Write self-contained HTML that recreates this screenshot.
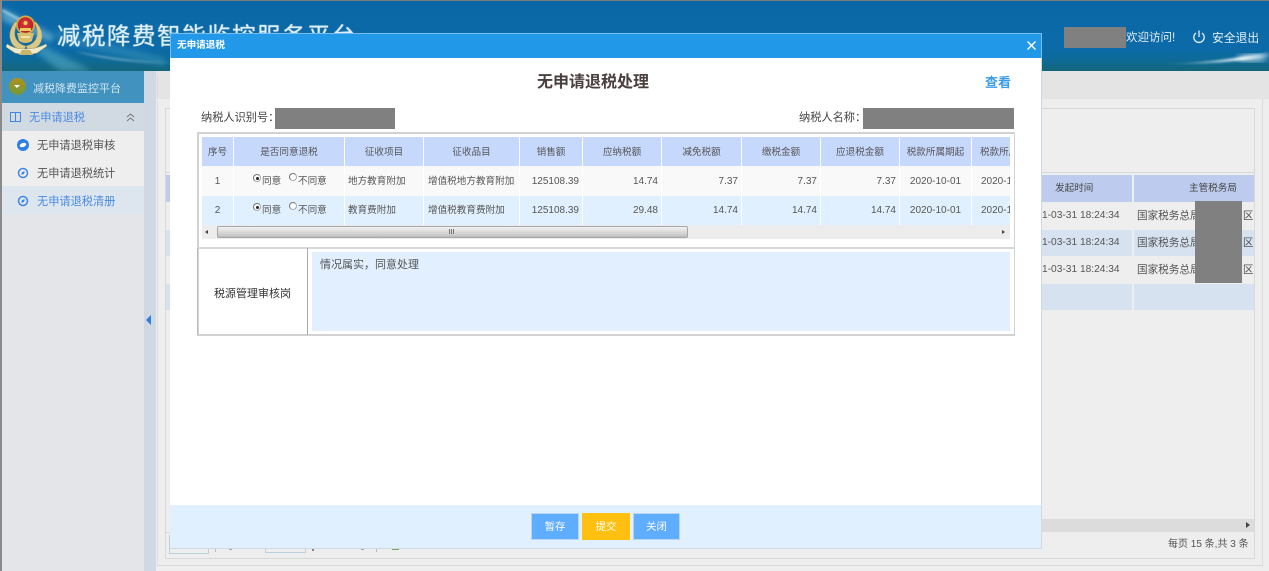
<!DOCTYPE html>
<html lang="zh"><head><meta charset="utf-8"><title>无申请退税</title>
<style>
html,body{margin:0;padding:0;width:1269px;height:571px;overflow:hidden;background:#eee}
body{position:relative;font-family:"Liberation Sans","Noto Sans CJK SC",sans-serif;font-size:11px;color:#444}
.a{position:absolute;box-sizing:border-box;white-space:nowrap}
.c{text-align:center}.r{text-align:right}
.g{background:#808080}
.h{background:#c7d8fd;color:#555;text-align:center;line-height:31px;height:29px;top:137px;font-size:9.6px}
.r1{top:166px;height:30px;line-height:31px;background:#f9f9f9;font-size:10px;color:#555}
.r2{top:196px;height:29px;line-height:29px;background:#e1f0fe;font-size:10px;color:#555}
.t{font-size:9.6px;line-height:31px}
.r2.t{line-height:29px}
.rad{width:8px;height:8px;border-radius:50%;border:1px solid #aaa;background:#fff;border-top-color:#777;border-left-color:#777}
.rad.on:after{content:"";position:absolute;left:1.5px;top:1.5px;width:3px;height:3px;border-radius:50%;background:#222}
.lb{font-size:9.6px;line-height:15px;color:#555}
.btn{top:513px;height:27px;line-height:27px;color:#fff;text-align:center;font-size:10.4px;border:1px solid #b9d6f2}
.bg{font-size:10.2px;line-height:14px;color:#555;overflow:hidden}
</style></head><body>
<div class="a" style="left:0;top:0;width:1269px;height:1px;background:#7b7b7b"></div>
<div class="a" style="left:0;top:0;width:2px;height:571px;background:#8a8a8a;z-index:9"></div>
<div class="a" style="left:0;top:1px;width:1269px;height:70px;background:linear-gradient(180deg,#0b68a6 0%,#0c6aa8 68%,#0d6a98 84%,#14667a 100%)"></div>
<svg class="a" style="left:0;top:0" width="1269" height="71">
<defs>
<linearGradient id="sw" x1="0" x2="1"><stop offset="0" stop-color="#cfeaf4" stop-opacity="0"/><stop offset=".75" stop-color="#eef9fc" stop-opacity=".95"/><stop offset="1" stop-color="#cfeaf4" stop-opacity=".2"/></linearGradient>
<linearGradient id="sl" x1="0" x2="1"><stop offset="0" stop-color="#cfeaf4" stop-opacity=".8"/><stop offset="1" stop-color="#cfeaf4" stop-opacity=".05"/></linearGradient>
<filter id="b1"><feGaussianBlur stdDeviation="3"/></filter>
<filter id="b2"><feGaussianBlur stdDeviation="1"/></filter>
<radialGradient id="rg" cx=".5" cy=".4" r=".6"><stop offset="0" stop-color="#e03a3a"/><stop offset="1" stop-color="#b31c24"/></radialGradient>
</defs>
<g filter="url(#b1)"><path d="M2 8L55 36L50 42L2 20Z" fill="#8fd0e6" opacity=".55"/><path d="M44 46L92 71H60L36 52Z" fill="#5fb4cf" opacity=".5"/><path d="M55 30L165 58L165 66L60 42Z" fill="#3f9cc6" opacity=".45"/></g>
<path d="M74 51Q120 61 172 62V63.5Q120 64 74 51Z" fill="url(#sl)" filter="url(#b2)"/>
<path d="M2 10L24 22" stroke="#cfeaf4" stroke-width="2" opacity=".7" filter="url(#b2)"/>
<path d="M1160 64Q1215 63 1269 52V57Q1215 65 1160 64Z" fill="url(#sw)" filter="url(#b2)"/>
<ellipse cx="1252" cy="58" rx="15" ry="4" fill="#fff" opacity=".55" filter="url(#b1)"/>
<!-- emblem -->
<path d="M15 22Q7 32 11 42Q14 49 24 50L26 46Q17 44 15 36Q14 29 18 22Z" fill="#d8c98a" stroke="#8f8448" stroke-width=".5"/>
<path d="M36 22Q45 32 41 42Q38 49 28 50L26 46Q35 44 37 36Q38 29 34 22Z" fill="#d8c98a" stroke="#8f8448" stroke-width=".5"/>
<circle cx="25.5" cy="25" r="9.5" fill="#d2ac4a"/>
<circle cx="25.5" cy="25" r="7.8" fill="url(#rg)"/>
<circle cx="25.5" cy="23" r="2" fill="#f0d060"/>
<path d="M20 28H31V31H20Z" fill="#eccb5c"/>
<path d="M17 33H34L32 41Q25.5 45 19 41Z" fill="#d8bd6a"/>
<path d="M21 36H30V38H21Z" fill="#f0e2a8"/>
<path d="M7 44Q14 49 25 49Q37 49 46 44L47 46L37 53Q26 56 15 53L6 47Z" fill="#eeeacb" stroke="#a39a62" stroke-width=".5"/>
<path d="M22 50H30L33 55H19Z" fill="#c9b468"/>
</svg>
<div class="a" style="left:57px;top:20px;font-size:23.5px;line-height:32px;letter-spacing:1.5px;color:#dceef6;text-shadow:0 0 1px #fff">减税降费智能监控服务平台</div>
<div class="a g" style="left:1064px;top:27px;width:62px;height:21px"></div>
<div class="a" style="left:1126px;top:30px;font-size:11.5px;line-height:16px;color:#e4eff6">欢迎访问!</div>
<svg class="a" style="left:1192px;top:30px" width="14" height="14" fill="none" stroke="#e4eff6" stroke-width="1.3"><path d="M4 3A5.2 5.2 0 1 0 10 3M7 0.5V7"/></svg>
<div class="a" style="left:1212px;top:30px;font-size:11.8px;line-height:16px;color:#e4eff6">安全退出</div>

<!-- sidebar -->
<div class="a" style="left:2px;top:71px;width:142px;height:500px;background:#e4e5e9"></div>
<div class="a" style="left:2px;top:71px;width:142px;height:32px;background:#4292c0"></div>
<div class="a" style="left:9px;top:78px;width:17px;height:17px;border-radius:50%;background:linear-gradient(#b0901c,#6f9a3a)"></div>
<div class="a" style="left:14px;top:85px;border-left:3.5px solid transparent;border-right:3.5px solid transparent;border-top:3px solid #fff"></div>
<div class="a" style="left:33px;top:81px;line-height:16px;color:#cfe4ef">减税降费监控平台</div>
<div class="a" style="left:2px;top:103px;width:142px;height:28px;background:#d1d9e3"></div>
<svg class="a" style="left:10px;top:112px" width="12" height="11" fill="none" stroke="#3f87e0"><path d="M.5.5H10.5V9.5H.5ZM5.5.5V9.5"/></svg>
<div class="a" style="left:29px;top:111px;line-height:15px;color:#4a8be0;font-size:11.2px">无申请退税</div>
<svg class="a" style="left:126px;top:113px" width="9" height="9" fill="none" stroke="#777" stroke-width="1"><path d="M1 4L4.5 1L8 4M1 8L4.5 5L8 8"/></svg>
<div class="a" style="left:2px;top:131px;width:142px;height:55px;background:#eee"></div>
<div class="a" style="left:2px;top:186px;width:142px;height:28px;background:#dde5ef"></div>
<svg class="a" style="left:16px;top:138px" width="14" height="14"><circle cx="7" cy="7" r="6" fill="#2f7fe6"/><ellipse cx="7" cy="7" rx="3.4" ry="2" fill="#fff" transform="rotate(-20 7 7)"/></svg>
<svg class="a" style="left:17px;top:167px" width="12" height="12" fill="none" stroke="#3f87e0" stroke-width="1.5"><circle cx="6" cy="6" r="4.5"/><path d="M4.2 7.8L5 5L7.8 4.2L7 7Z" fill="#3f87e0" stroke="none"/></svg>
<svg class="a" style="left:17px;top:195px" width="12" height="12" fill="none" stroke="#3f87e0" stroke-width="1.5"><circle cx="6" cy="6" r="4.5"/><path d="M4.2 7.8L5 5L7.8 4.2L7 7Z" fill="#3f87e0" stroke="none"/></svg>
<div class="a" style="left:37px;top:139px;line-height:15px;color:#555;font-size:11.2px">无申请退税审核</div>
<div class="a" style="left:37px;top:167px;line-height:15px;color:#555;font-size:11.2px">无申请退税统计</div>
<div class="a" style="left:37px;top:195px;line-height:15px;color:#4a8be0;font-size:11.2px">无申请退税清册</div>
<div class="a" style="left:144px;top:71px;width:12px;height:500px;background:#cfd8e3"></div>
<div class="a" style="left:146px;top:315px;border-top:5px solid transparent;border-bottom:5px solid transparent;border-right:5px solid #2b7de0"></div>

<!-- main content behind -->
<div class="a" style="left:156px;top:71px;width:1113px;height:28px;background:#e4e4e4"></div>
<div class="a" style="left:157px;top:75px;width:1px;height:490px;background:#dcdcdc"></div>
<div class="a" style="left:156px;top:99px;width:1113px;height:1px;background:#ececec"></div>
<div class="a" style="left:165px;top:108px;width:1090px;height:65px;border:1px solid #d8d8d8"></div>
<div class="a" style="left:165px;top:175px;width:1090px;height:27px;background:#bccbee"></div>
<div class="a" style="left:165px;top:230px;width:1090px;height:26px;background:#d6e2f0"></div>
<div class="a" style="left:165px;top:284px;width:1090px;height:26px;background:#d6e2f0"></div>
<div class="a" style="left:1132px;top:175px;width:2px;height:135px;background:#eee"></div>
<div class="a" style="left:1254px;top:108px;width:1px;height:450px;background:#d8d8d8"></div>
<div class="a" style="left:1262px;top:99px;width:1px;height:467px;background:#dcdcdc"></div>
<div class="a" style="left:1055px;top:182px;line-height:14px;color:#444;font-size:9.6px">发起时间</div>
<div class="a" style="left:1189px;top:182px;line-height:14px;color:#444;font-size:9.6px">主管税务局</div>
<div class="a bg" style="left:1042px;top:209px;width:90px">1-03-31 18:24:34</div>
<div class="a bg" style="left:1042px;top:236px;width:90px">1-03-31 18:24:34</div>
<div class="a bg" style="left:1042px;top:263px;width:90px">1-03-31 18:24:34</div>
<div class="a bg" style="left:1137px;top:209px;width:116px;font-size:10.6px">国家税务总局武汉市东区税务局</div>
<div class="a bg" style="left:1137px;top:236px;width:116px;font-size:10.6px">国家税务总局武汉市东区税务局</div>
<div class="a bg" style="left:1137px;top:263px;width:116px;font-size:10.6px">国家税务总局武汉市东区税务局</div>
<div class="a g" style="left:1195px;top:201px;width:47px;height:82px"></div>
<div class="a" style="left:1041px;top:519px;width:213px;height:13px;background:#dcdcdc"></div>
<div class="a" style="left:1246px;top:522px;border-top:3px solid transparent;border-bottom:3px solid transparent;border-left:4px solid #444"></div>
<div class="a" style="left:1168px;top:538px;line-height:14px;color:#555;font-size:10px">每页 15 条,共 3 条</div>
<div class="a" style="left:165px;top:108px;width:1px;height:450px;background:#d8d8d8"></div>
<div class="a" style="left:165px;top:558px;width:1090px;height:1px;background:#d8d8d8"></div>
<div class="a" style="left:157px;top:565px;width:1106px;height:1px;background:#d8d8d8"></div>
<div class="a" style="left:169px;top:535px;width:40px;height:19px;border:1px solid #bcd0de"></div>
<div class="a" style="left:265px;top:535px;width:41px;height:18px;border:1px solid #bcd0de"></div>
<div class="a" style="left:165px;top:532px;width:5px;height:1px;background:#d8d8d8"></div>
<div class="a" style="left:215px;top:548px;width:1px;height:4px;background:#bbb"></div>
<div class="a" style="left:229px;top:548px;width:3px;height:2px;background:#9aa3cf"></div>
<div class="a" style="left:312px;top:548px;width:2px;height:3px;background:#8f7f8f"></div>
<div class="a" style="left:361px;top:548px;width:3px;height:2px;background:#9aa3cf"></div>
<div class="a" style="left:376px;top:548px;width:1px;height:4px;background:#bbb"></div>
<div class="a" style="left:392px;top:548px;width:7px;height:2px;background:#78a860"></div>

<!-- dialog -->
<div class="a" style="left:170px;top:33px;width:872px;height:516px;background:#fff;border-right:1px solid #cfd8e3;border-bottom:1px solid #cfd8e3"></div>
<div class="a" style="left:170px;top:33px;width:872px;height:25px;background:#2299e8;border:1px solid #76bdf0;border-bottom:0"></div>
<div class="a" style="left:177px;top:38px;line-height:15px;color:#fff;font-size:9.6px;font-weight:bold">无申请退税</div>
<svg class="a" style="left:1027px;top:41px" width="9" height="9" stroke="#fff" stroke-width="1.5"><path d="M.5.5L8.5 8.5M8.5.5L.5 8.5"/></svg>
<div class="a c" style="left:170px;top:72px;width:846px;line-height:22px;font-size:16px;font-weight:bold;color:#4a3e3e">无申请退税处理</div>
<div class="a" style="left:985px;top:74px;line-height:17px;font-size:13px;font-weight:bold;color:#3b9be8">查看</div>
<div class="a" style="left:201px;top:110px;line-height:16px;color:#444;font-size:11.2px">纳税人识别号：</div>
<div class="a g" style="left:275px;top:108px;width:120px;height:21px"></div>
<div class="a" style="left:799px;top:110px;line-height:16px;color:#444;font-size:11.2px">纳税人名称：</div>
<div class="a g" style="left:863px;top:108px;width:151px;height:21px"></div>

<div class="a" style="left:197px;top:132px;width:818px;height:204px;border:1px solid #d2d2d2;border-width:2px 1px 2px 2px"></div>
<div class="a" style="left:197px;top:247px;width:818px;height:2px;background:#d8d8d8"></div>
<div class="a" style="left:197px;top:248px;width:1px;height:87px;background:#bbb"></div>
<div class="a" style="left:307px;top:248px;width:1px;height:87px;background:#aaa"></div>
<div class="a" style="left:312px;top:252px;width:698px;height:79px;background:#e1effe"></div>
<div class="a c" style="left:198px;top:286px;width:109px;line-height:16px;color:#333">税源管理审核岗</div>
<div class="a" style="left:320px;top:258px;line-height:15px;color:#555">情况属实，同意处理</div>

<!-- table headers -->
<div class="a h" style="left:202px;width:31px">序号</div>
<div class="a h" style="left:234px;width:110px">是否同意退税</div>
<div class="a h" style="left:345px;width:78px">征收项目</div>
<div class="a h" style="left:424px;width:95px">征收品目</div>
<div class="a h" style="left:520px;width:62px">销售额</div>
<div class="a h" style="left:583px;width:78px">应纳税额</div>
<div class="a h" style="left:662px;width:79px">减免税额</div>
<div class="a h" style="left:742px;width:78px">缴税金额</div>
<div class="a h" style="left:821px;width:78px">应退税金额</div>
<div class="a h" style="left:900px;width:71px">税款所属期起</div>
<div class="a h" style="left:972px;width:38px;overflow:hidden;text-align:left;padding-left:8px">税款所属期止</div>

<!-- row 1 -->
<div class="a r1 c" style="left:202px;width:31px">1</div>
<div class="a r1" style="left:234px;width:110px"></div>
<div class="a r1 t" style="left:345px;width:78px;padding-left:3px">地方教育附加</div>
<div class="a r1 t" style="left:424px;width:95px;padding-left:4px">增值税地方教育附加</div>
<div class="a r1 r" style="left:520px;width:62px;padding-right:3px">125108.39</div>
<div class="a r1 r" style="left:583px;width:78px;padding-right:3px">14.74</div>
<div class="a r1 r" style="left:662px;width:79px;padding-right:3px">7.37</div>
<div class="a r1 r" style="left:742px;width:78px;padding-right:3px">7.37</div>
<div class="a r1 r" style="left:821px;width:78px;padding-right:3px">7.37</div>
<div class="a r1 c" style="left:900px;width:71px">2020-10-01</div>
<div class="a r1" style="left:972px;width:38px;overflow:hidden;padding-left:9px">2020-12-31</div>
<!-- row 2 -->
<div class="a r2 c" style="left:202px;width:31px">2</div>
<div class="a r2" style="left:234px;width:110px"></div>
<div class="a r2 t" style="left:345px;width:78px;padding-left:3px">教育费附加</div>
<div class="a r2 t" style="left:424px;width:95px;padding-left:4px">增值税教育费附加</div>
<div class="a r2 r" style="left:520px;width:62px;padding-right:3px">125108.39</div>
<div class="a r2 r" style="left:583px;width:78px;padding-right:3px">29.48</div>
<div class="a r2 r" style="left:662px;width:79px;padding-right:3px">14.74</div>
<div class="a r2 r" style="left:742px;width:78px;padding-right:3px">14.74</div>
<div class="a r2 r" style="left:821px;width:78px;padding-right:3px">14.74</div>
<div class="a r2 c" style="left:900px;width:71px">2020-10-01</div>
<div class="a r2" style="left:972px;width:38px;overflow:hidden;padding-left:9px">2020-12-31</div>
<!-- radios -->
<div class="a rad on" style="left:253px;top:174px"></div>
<div class="a lb" style="left:262px;top:174px">同意</div>
<div class="a rad" style="left:289px;top:173px"></div>
<div class="a lb" style="left:298px;top:174px">不同意</div>
<div class="a rad on" style="left:253px;top:203px"></div>
<div class="a lb" style="left:262px;top:203px">同意</div>
<div class="a rad" style="left:289px;top:202px"></div>
<div class="a lb" style="left:298px;top:203px">不同意</div>
<!-- scrollbar -->
<div class="a" style="left:202px;top:225px;width:808px;height:14px;background:#ececec"></div>
<div class="a" style="left:217px;top:226px;width:471px;height:12px;border:1px solid #a6a6a6;border-radius:2px;background:linear-gradient(#f2f2f2,#d0d0d0 70%,#bdbdbd)"></div>
<div class="a" style="left:205px;top:230px;border-top:2.5px solid transparent;border-bottom:2.5px solid transparent;border-right:3px solid #444"></div>
<div class="a" style="left:1002px;top:230px;border-top:2.5px solid transparent;border-bottom:2.5px solid transparent;border-left:3px solid #444"></div>
<div class="a" style="left:449px;top:229px;width:5px;height:5px;border-left:1px solid #777;border-right:1px solid #777"></div>
<div class="a" style="left:451px;top:229px;width:1px;height:5px;background:#777"></div>

<!-- footer -->
<div class="a" style="left:170px;top:505px;width:871px;height:43px;background:#e1f0fe"></div>
<div class="a btn" style="left:531px;width:48px;background:#5fadff">暂存</div>
<div class="a btn" style="left:582px;width:48px;background:#ffc010;border-color:#ffc010">提交</div>
<div class="a btn" style="left:633px;width:47px;background:#5fadff">关闭</div>
</body></html>
